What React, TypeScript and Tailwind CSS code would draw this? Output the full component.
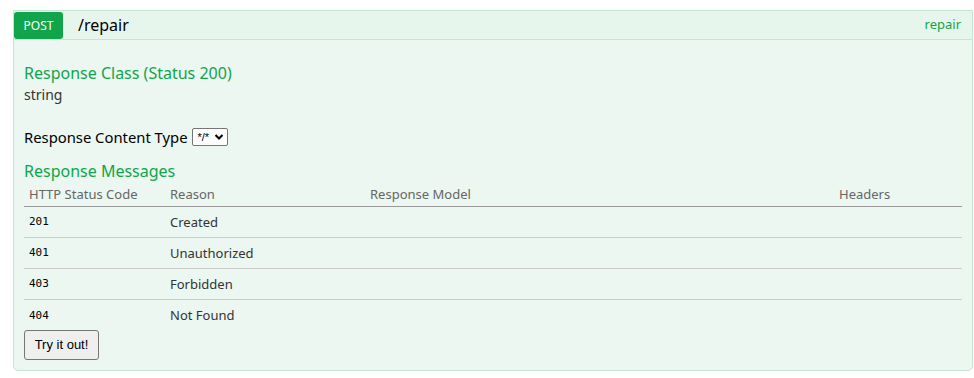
import React from "react";

const rows = [
  ["201", "Created"],
  ["401", "Unauthorized"],
  ["403", "Forbidden"],
  ["404", "Not Found"],
];

export default function App() {
  return (
    <div className="w-[974px] h-[378px] bg-white pt-[10px] pl-[13px] pr-[1px]" style={{ fontFamily: '"Noto Sans", "Open Sans", sans-serif' }}>
      <div className="border border-[#c3e8d1] rounded-b-[5px] bg-[#ebf7f0]">
        <div className="flex items-center h-[29px] bg-[#e7f6ec] border-b border-[#c3e8d1]">
          <span className="flex items-center justify-center w-[49px] h-[27px] pt-[2px] bg-[#10a54a] text-white text-[12px] rounded-[3px]">POST</span>
          <span className="ml-[15px] text-[16px] text-black">/repair</span>
          <span className="ml-auto mr-[11px] text-[13px] text-[#10a54a]">repair</span>
        </div>
        <div className="px-[10px] pb-[10px]">
          <div className="mt-[22px] text-[16px] leading-[22px] text-[#10a54a]">Response Class (Status 200)</div>
          <div className="mt-[1px] text-[14px] leading-[20px] text-[#333]">string</div>
          <div className="mt-[22px] flex items-center text-[14.8px] text-black h-[20px]">
            <span>Response Content Type</span>
            <span className="ml-[4px] flex items-center h-[18px] pl-[5px] pr-[3px] border border-[#767676] rounded-[2px] bg-white text-[11px]" style={{ fontFamily: '"Liberation Sans", sans-serif' }}>
              */*
              <svg width="10" height="8" viewBox="0 0 10 8" className="ml-[5px]"><path d="M1.5 2 L5 5.5 L8.5 2" fill="none" stroke="black" strokeWidth="2" /></svg>
            </span>
          </div>
          <div className="mt-[13px] text-[16px] leading-[22px] text-[#10a54a]">Response Messages</div>
          <table className="w-full border-collapse text-[13px]">
            <thead>
              <tr className="border-b border-[#999] text-[#666] text-left">
                <th className="font-normal pl-[5px] pt-[3px] w-[146px] h-[24px] align-top">HTTP Status Code</th>
                <th className="font-normal pt-[3px] w-[200px] align-top">Reason</th>
                <th className="font-normal pt-[3px] align-top">Response Model</th>
                <th className="font-normal pt-[3px] w-[123px] align-top">Headers</th>
              </tr>
            </thead>
            <tbody>
              {rows.map(([c, r], i) => (
                <tr key={c} className={i < rows.length - 1 ? "border-b border-[#ccc]" : ""}>
                  <td className="pl-[5px] pt-[2px] h-[31px] text-[11px] text-black" style={{ fontFamily: '"DejaVu Sans Mono", monospace' }}>{c}</td>
                  <td className="pt-[2px] text-[#333]">{r}</td>
                  <td></td>
                  <td></td>
                </tr>
              ))}
            </tbody>
          </table>
          <button className="block w-[75px] h-[30px] border border-[#767676] rounded-[3px] bg-[#efefef] text-[13px] text-black" style={{ fontFamily: '"Liberation Sans", sans-serif' }}>Try it out!</button>
        </div>
      </div>
    </div>
  );
}
